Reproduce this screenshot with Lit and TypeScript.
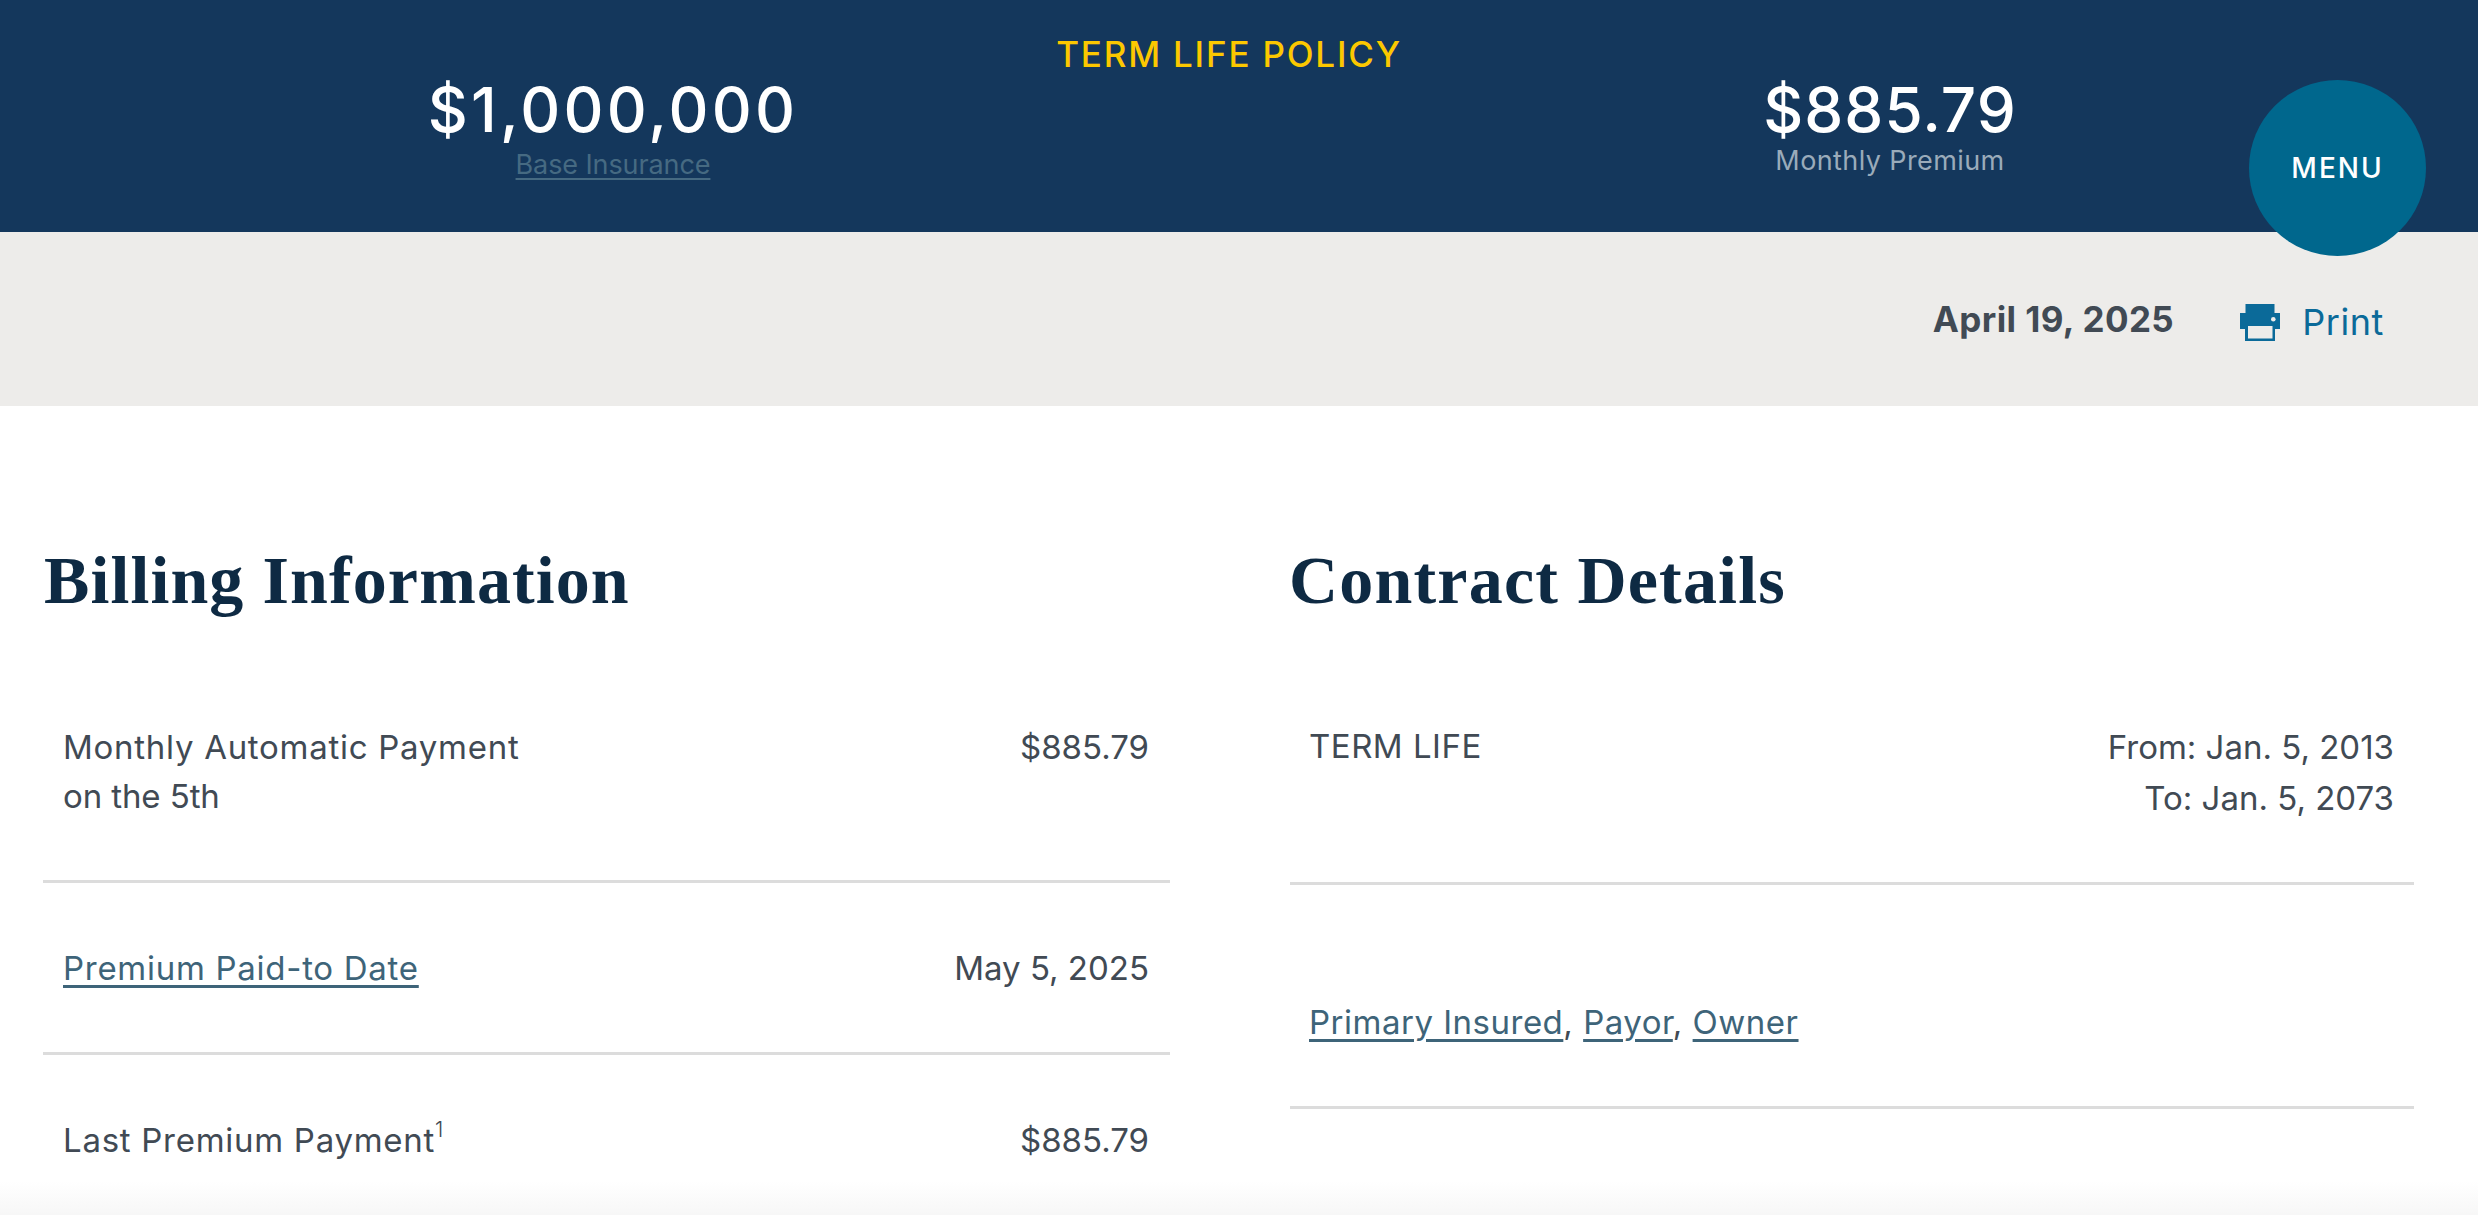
import { LitElement, html, css } from "lit";
import { customElement } from "lit/decorators.js";

@customElement("app-root")
export class AppRoot extends LitElement {
  static styles = css`
    :host { display: block; position: relative; width: 2478px; height: 1215px; overflow: hidden; background: #fff; font-family: Inter, "Noto Sans", sans-serif; color: #414a54; }
    .top { display: grid; grid-template-columns: 1052px 354px 968px; height: 232px; background: #14375c; box-sizing: border-box; }
    .fig-left { padding: 72px 0 0 174px; text-align: center; }
    .title { padding-top: 33px; text-align: center; color: #fcc800; font-size: 35px; line-height: 42px; font-weight: 500; letter-spacing: 1.8px; white-space: nowrap; }
    .fig-right { padding-top: 72px; text-align: center; }
    .amount { color: #fff; font-size: 62px; line-height: 76px; font-weight: 500; letter-spacing: 1px; }
    .amount.wide { letter-spacing: 3.200px; }
    .sub { font-size: 27px; line-height: 36px; }
    .sub.link { color: #466a82; letter-spacing: -.1px; margin-top: -1px; text-decoration: underline; text-decoration-thickness: 2px; text-underline-offset: 4px; }
    .sub.muted { color: #9aabba; letter-spacing: .4px; margin-top: -5px; }
    .menu { position: absolute; left: 2249px; top: 80px; width: 177px; height: 176px; border-radius: 50%; background: #00678d; color: #fff; display: flex; align-items: center; justify-content: center; font-size: 28px; font-weight: 500; letter-spacing: 2px; }
    .bar { display: flex; justify-content: flex-end; align-items: center; height: 174px; background: #edecea; padding-right: 94px; box-sizing: border-box; }
    .date { font-size: 35px; font-weight: 700; letter-spacing: .4px; margin-right: 66px; }
    .print { display: flex; align-items: center; gap: 22px; color: #0b6a99; font-size: 36px; font-weight: 400; letter-spacing: .6px; padding-top: 6px; }
    .print svg { width: 40px; height: 37px; display: block; }
    .cols { display: grid; grid-template-columns: 1127px 1124px; column-gap: 120px; padding: 134px 0 0 43px; }
    h2 { margin: 0 0 0 1px; font-family: "Liberation Serif", serif; font-size: 68px; line-height: 80px; font-weight: 700; color: #0e2a43; height: 122px; letter-spacing: 1.1px; }
    .alt h2 { margin-left: -1px; letter-spacing: 1.200px; }
    .row { display: flex; justify-content: space-between; padding: 61px 21px 59px 20px; border-bottom: 3px solid #dcdcdc; font-size: 33px; line-height: 49px; letter-spacing: .72px; }
    .alt .row { padding-left: 19px; padding-right: 20px; letter-spacing: .5px; }
    .alt .row.first { padding-top: 60px; padding-bottom: 58px; }
    .alt .row.tall { padding-top: 113px; }
    .row.last { border-bottom: 0; }
    .r { text-align: right; letter-spacing: 0; }
    .alt .row .r { line-height: 51px; letter-spacing: 0; }
    .tight { letter-spacing: -.1px; }
    a { color: #3e6479; text-decoration: underline; text-decoration-thickness: 2.500px; text-underline-offset: 5px; }
    sup { font-size: 21px; line-height: 0; font-weight: 300; vertical-align: 15px; }
    .fade { position: absolute; left: 0; right: 0; bottom: 0; height: 34px; background: linear-gradient(to bottom, rgba(246,246,246,0), rgba(246,246,246,.9)); }
  `;

  render() {
    return html`
      <div class="top">
        <div class="fig-left">
          <div class="amount wide">$1,000,000</div>
          <div class="sub link">Base Insurance</div>
        </div>
        <div class="title">TERM LIFE POLICY</div>
        <div class="fig-right">
          <div class="amount">$885.79</div>
          <div class="sub muted">Monthly Premium</div>
        </div>
      </div>
      <div class="menu">MENU</div>
      <div class="bar">
        <div class="date">April 19, 2025</div>
        <div class="print">
          <svg viewBox="0 0 40 37"><path fill="currentColor" fill-rule="evenodd" d="M5.5 0h29v9H40v16h-5v12H5V25H0V9h5.5zM8 22v12.500h24.500V22z"/><circle cx="33.300" cy="15.300" r="2.300" fill="#edecea"/></svg>
          <span>Print</span>
        </div>
      </div>
      <div class="cols">
        <section>
          <h2>Billing Information</h2>
          <div class="row first"><div>Monthly Automatic Payment<br /><span class="tight">on the 5th</span></div><div class="r">$885.79</div></div>
          <div class="row"><a>Premium Paid-to Date</a><div class="r">May 5, 2025</div></div>
          <div class="row last"><div>Last Premium Payment<sup>1</sup></div><div class="r">$885.79</div></div>
        </section>
        <section class="alt">
          <h2>Contract Details</h2>
          <div class="row first"><div>TERM LIFE</div><div class="r">From: Jan. 5, 2013<br />To: Jan. 5, 2073</div></div>
          <div class="row tall"><div><a>Primary Insured</a>, <a>Payor</a>, <a>Owner</a></div></div>
        </section>
      </div>
      <div class="fade"></div>
    `;
  }
}
